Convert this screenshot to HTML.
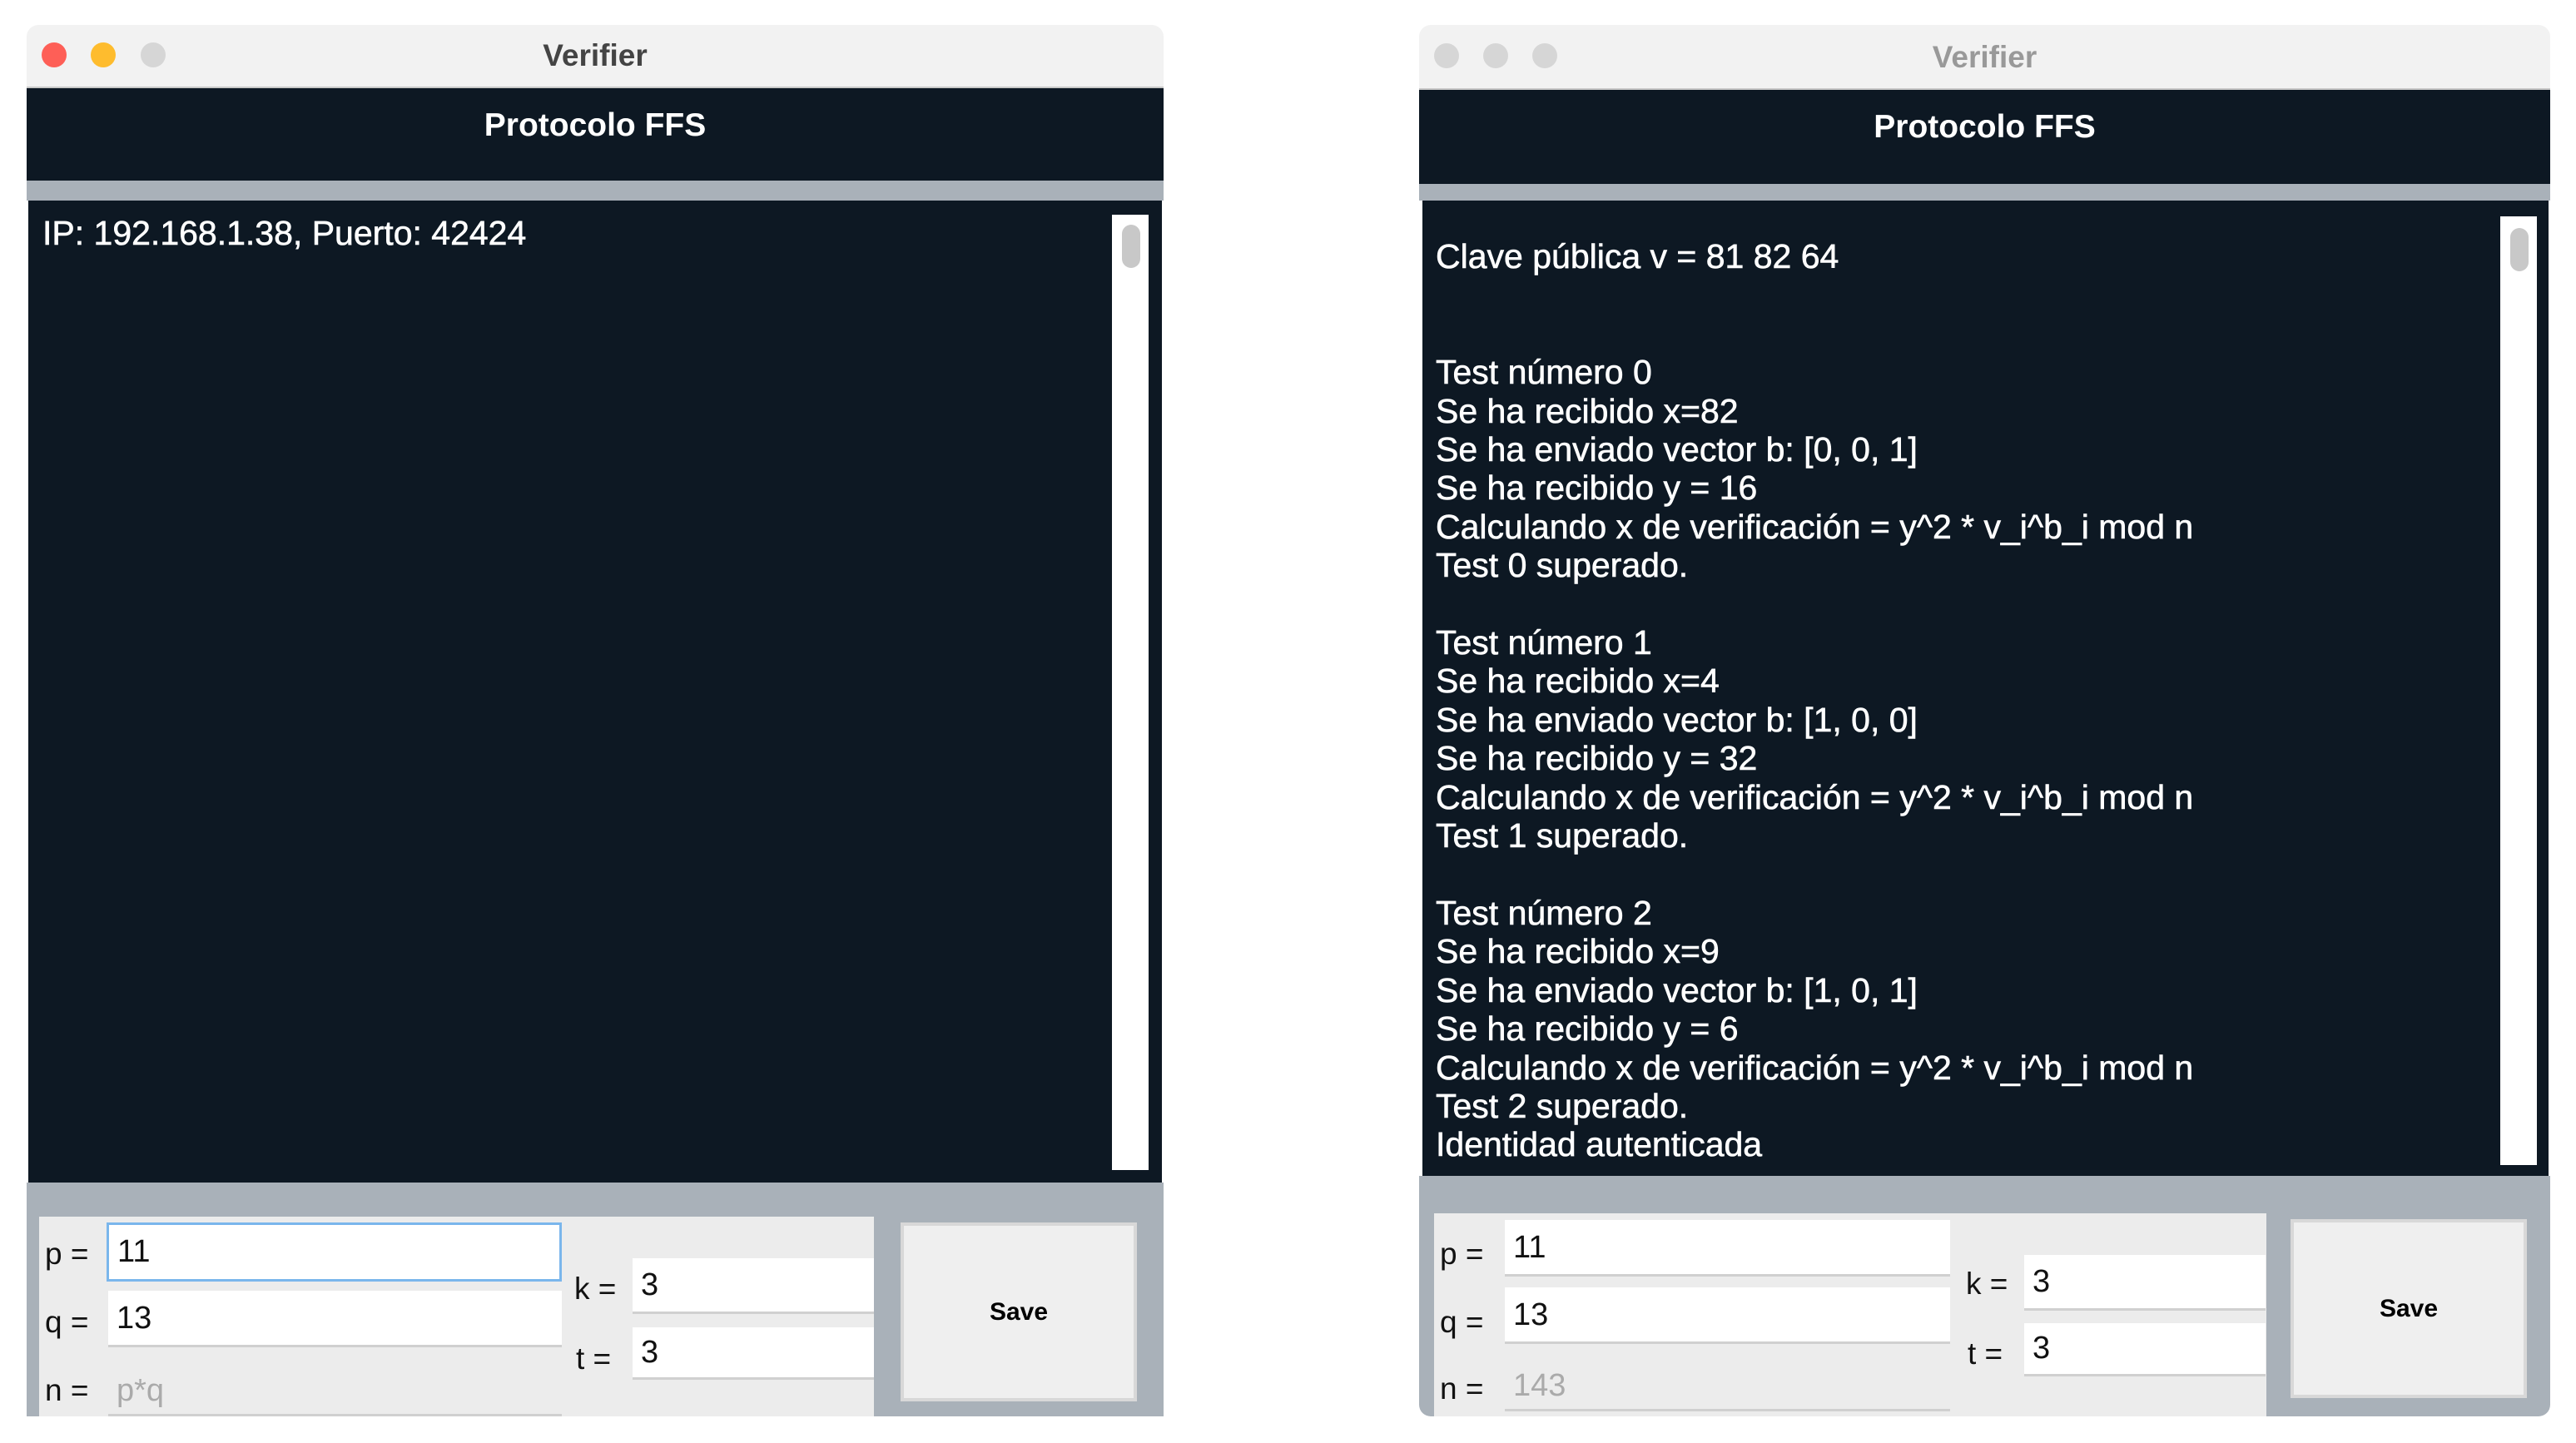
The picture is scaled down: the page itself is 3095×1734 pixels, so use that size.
<!DOCTYPE html>
<html><head><meta charset="utf-8"><style>
*{margin:0;padding:0;box-sizing:border-box}
body{width:3095px;height:1734px;background:#fff;position:relative;overflow:hidden;font-family:"Liberation Sans",sans-serif}
.a{position:absolute}
.tb{background:#f2f2f2;border-radius:14px 14px 0 0;border-bottom:2px solid #c8c8c8}
.dot{position:absolute;width:30px;height:30px;border-radius:50%;top:50px}
.title{position:absolute;left:0;right:0;text-align:center;font-weight:bold;font-size:37px;top:40px}
.hdr{background:#0d1823;color:#fff;font-weight:bold;font-size:39px;text-align:center}
.strip{background:#a9b1b9}
.ta{background:#0d1823;color:#fff;font-size:41px;line-height:46.4px}
.sb{background:#fff}
.thumb{position:absolute;background:#c8c8c8;border-radius:12px}
.panel{background:#a9b1b9}
.inner{background:#ececec}
.fld{background:#fff;border-bottom:3px solid #d0d0d0;font-size:38px;padding-left:10px;color:#111}
.lbl{font-size:37px;color:#111}
.btn{background:#efefef;border:4px solid #d8d8d8;font-weight:bold;font-size:30px;display:flex;align-items:center;justify-content:center}
.sq{display:inline-block;white-space:pre;-webkit-text-stroke:0.6px #fff}
</style></head><body>

<!-- LEFT WINDOW -->
<div class="a tb" style="left:32px;top:30px;width:1366px;height:76px">
 <div class="dot" style="left:18px;top:21px;background:#fe5f57"></div>
 <div class="dot" style="left:77px;top:21px;background:#febc2e"></div>
 <div class="dot" style="left:137px;top:21px;background:#d6d6d6"></div>
 <div class="title" style="top:16px;color:#444">Verifier</div>
</div>
<div class="a hdr" style="left:32px;top:106px;width:1366px;height:111px;line-height:90px">Protocolo FFS</div>
<div class="a strip" style="left:32px;top:217px;width:1366px;height:24px"></div>
<div class="a ta" style="left:34px;top:241px;width:1362px;height:1180px;padding:16px 0 0 17px"><span class="sq">IP: 192.168.1.38, Puerto: 42424</span></div>
<div class="a sb" style="left:1336px;top:258px;width:44px;height:1148px"><div class="thumb" style="left:12px;top:12px;width:22px;height:52px"></div></div>
<div class="a panel" style="left:32px;top:1421px;width:1366px;height:281px"></div>
<div class="a inner" style="left:47px;top:1462px;width:1003px;height:240px"></div>
<div class="a fld" style="left:128px;top:1469px;width:547px;height:71px;border:3px solid #7ab6ec;line-height:64px">11</div>
<div class="a fld" style="left:130px;top:1551px;width:545px;height:68px;line-height:66px">13</div>
<div class="a fld" style="left:130px;top:1640px;width:545px;height:62px;line-height:62px;background:#ececec;color:#aaa">p*q</div>
<div class="a lbl" style="left:54px;top:1486px">p =</div>
<div class="a lbl" style="left:54px;top:1568px">q =</div>
<div class="a lbl" style="left:54px;top:1650px">n =</div>
<div class="a lbl" style="left:690px;top:1528px">k =</div>
<div class="a lbl" style="left:692px;top:1612px">t =</div>
<div class="a fld" style="left:760px;top:1512px;width:290px;height:67px;line-height:64px">3</div>
<div class="a fld" style="left:760px;top:1595px;width:290px;height:63px;line-height:60px">3</div>
<div class="a btn" style="left:1082px;top:1469px;width:284px;height:215px">Save</div>

<!-- RIGHT WINDOW -->
<div class="a tb" style="left:1705px;top:30px;width:1359px;height:78px">
 <div class="dot" style="left:18px;top:22px;background:#d6d6d6"></div>
 <div class="dot" style="left:77px;top:22px;background:#d6d6d6"></div>
 <div class="dot" style="left:136px;top:22px;background:#d6d6d6"></div>
 <div class="title" style="top:18px;color:#999">Verifier</div>
</div>
<div class="a hdr" style="left:1705px;top:108px;width:1359px;height:113px;line-height:90px">Protocolo FFS</div>
<div class="a strip" style="left:1705px;top:221px;width:1359px;height:20px"></div>
<div class="a ta" style="left:1709px;top:241px;width:1353px;height:1172px;padding:44px 0 0 16px"><span class="sq">Clave pública v = 81 82 64


Test número 0
Se ha recibido x=82
Se ha enviado vector b: [0, 0, 1]
Se ha recibido y = 16
Calculando x de verificación = y^2 * v_i^b_i mod n
Test 0 superado.

Test número 1
Se ha recibido x=4
Se ha enviado vector b: [1, 0, 0]
Se ha recibido y = 32
Calculando x de verificación = y^2 * v_i^b_i mod n
Test 1 superado.

Test número 2
Se ha recibido x=9
Se ha enviado vector b: [1, 0, 1]
Se ha recibido y = 6
Calculando x de verificación = y^2 * v_i^b_i mod n
Test 2 superado.
Identidad autenticada</span></div>
<div class="a sb" style="left:3004px;top:260px;width:44px;height:1140px"><div class="thumb" style="left:12px;top:14px;width:22px;height:52px"></div></div>
<div class="a panel" style="left:1705px;top:1413px;width:1359px;height:289px;border-radius:0 0 14px 14px"></div>
<div class="a inner" style="left:1723px;top:1458px;width:1000px;height:244px"></div>
<div class="a fld" style="left:1808px;top:1466px;width:535px;height:68px;line-height:66px">11</div>
<div class="a fld" style="left:1808px;top:1547px;width:535px;height:68px;line-height:66px">13</div>
<div class="a fld" style="left:1808px;top:1634px;width:535px;height:62px;line-height:62px;background:#ececec;color:#aaa">143</div>
<div class="a lbl" style="left:1730px;top:1486px">p =</div>
<div class="a lbl" style="left:1730px;top:1568px">q =</div>
<div class="a lbl" style="left:1730px;top:1648px">n =</div>
<div class="a lbl" style="left:2362px;top:1522px">k =</div>
<div class="a lbl" style="left:2364px;top:1606px">t =</div>
<div class="a fld" style="left:2432px;top:1508px;width:290px;height:67px;line-height:64px">3</div>
<div class="a fld" style="left:2432px;top:1590px;width:290px;height:64px;line-height:60px">3</div>
<div class="a btn" style="left:2752px;top:1465px;width:284px;height:215px">Save</div>
</body></html>
